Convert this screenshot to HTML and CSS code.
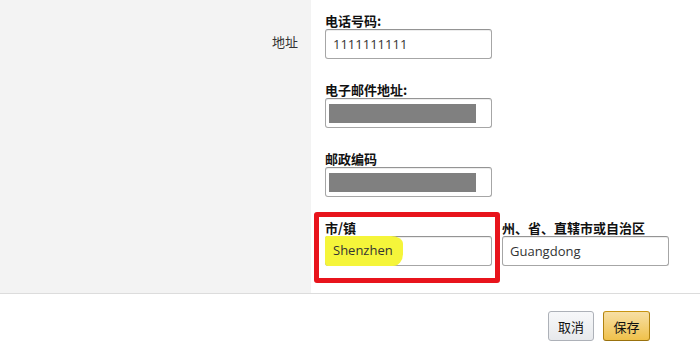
FILE: index.html
```html
<!DOCTYPE html>
<html lang="zh-CN">
<head>
  <meta charset="UTF-8">
  <title>地址</title>
  <link rel="stylesheet" href="styles.css">
</head>
<body>
  <div class="form-body">
    <div class="side">
      <div class="side-label">地址</div>
    </div>

    <div class="fields">
      <!-- Phone -->
      <div class="field">
        <div class="field-label">电话号码:</div>
        <div class="input">1111111111</div>
      </div>

      <!-- Email -->
      <div class="field">
        <div class="field-label">电子邮件地址:</div>
        <div class="input"><span class="redact"></span></div>
      </div>

      <!-- Postcode -->
      <div class="field">
        <div class="field-label">邮政编码</div>
        <div class="input"><span class="redact"></span></div>
      </div>

      <!-- City / State -->
      <div class="field-row">
        <div class="field marked">
          <span class="annot"></span>
          <div class="field-label">市/镇</div>
          <div class="input"><span class="highlight">Shenzhen</span></div>
        </div>
        <div class="field">
          <div class="field-label">州、省、直辖市或自治区</div>
          <div class="input">Guangdong</div>
        </div>
      </div>
    </div>
  </div>

  <div class="footer">
    <button class="btn btn-cancel">取消</button>
    <button class="btn btn-save">保存</button>
  </div>
</body>
</html>
```

FILE: styles.css
```css
* {
  margin: 0;
  padding: 0;
  box-sizing: border-box;
}

body {
  background: #fff;
  font-family: "Open Sans", "Noto Sans CJK SC", sans-serif;
  font-size: 13px;
  color: #111;
}

.form-body {
  display: flex;
  height: 294px;
  border-bottom: 1px solid #dcdcdc;
}

.side {
  width: 311px;
  background: #f3f3f3;
  padding: 33px 13px 0 0;
  text-align: right;
}

.side-label {
  font-family: "Noto Sans CJK SC", sans-serif;
  font-size: 13px;
  line-height: 18px;
  color: #333;
}

.fields {
  flex: 1;
  padding: 12px 0 0 14px;
}

.field {
  position: relative;
  width: 167px;
  margin-bottom: 22px;
}

.field-label {
  font-family: "Noto Sans CJK SC", sans-serif;
  font-weight: 700;
  font-size: 13px;
  line-height: 17px;
  color: #111;
}

.input {
  display: flex;
  align-items: center;
  height: 30px;
  padding: 0 7px;
  background: #fff;
  border: 1px solid #a6a6a6;
  border-top-color: #949494;
  border-radius: 3px;
  box-shadow: 0 1px 0 rgba(255, 255, 255, 0.5), inset 0 1px 0 rgba(0, 0, 0, 0.07);
  font-size: 13px;
  color: #333;
}

.redact {
  display: block;
  width: 147px;
  height: 19px;
  margin-left: -4px;
  background: #808080;
}

.field-row {
  display: flex;
  gap: 10px;
}

.highlight {
  margin-left: -8px;
  padding: 5px 10px 7px 8px;
  background: #f5f53a;
  border-radius: 2px 12px 10px 3px / 2px 8px 12px 4px;
}

.annot {
  position: absolute;
  top: -7px;
  left: -11px;
  width: 186px;
  height: 71px;
  border: 5px solid #e8141c;
  border-radius: 3px;
  pointer-events: none;
}

.footer {
  display: flex;
  justify-content: flex-end;
  gap: 9px;
  padding: 17px 50px 0 0;
}

.btn {
  height: 30px;
  padding: 0;
  border: 1px solid #adb1b8;
  border-radius: 3px;
  font-family: "Noto Sans CJK SC", sans-serif;
  font-size: 13px;
  color: #111;
  white-space: nowrap;
  cursor: pointer;
}

.btn-cancel {
  width: 46px;
  background: linear-gradient(#f7f8fa, #e7e9ec);
}

.btn-save {
  width: 47px;
  border-color: #c89411 #b0820f #99710d;
  background: linear-gradient(#f7dfa5, #f0c14b);
}
```
